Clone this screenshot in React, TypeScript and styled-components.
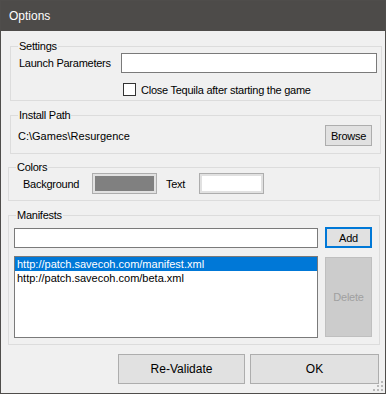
import styled, { createGlobalStyle } from "styled-components";

const GlobalStyle = createGlobalStyle`
  html, body {
    margin: 0;
    padding: 0;
    background: #f0f0f0;
  }
  body {
    font-family: "Liberation Sans", Arial, sans-serif;
    font-size: 11px;
    color: #000;
  }
`;

const Window = styled.div`
  position: relative;
  box-sizing: border-box;
  width: 386px;
  height: 394px;
  border: 1px solid #4f4d4b;
  background: #f0f0f0;
  display: flex;
  flex-direction: column;
`;

const TitleBar = styled.div`
  height: 30px;
  flex-shrink: 0;
  display: flex;
  align-items: center;
  padding-left: 8px;
  background: #4d4b49;
  color: #ffffff;
  font-size: 12px;
`;

const Group = styled.fieldset<{ $left: number; $width: number; $height: number; $top: number }>`
  box-sizing: border-box;
  margin: ${(p) => p.$top}px 0 0 ${(p) => p.$left}px;
  width: ${(p) => p.$width}px;
  height: ${(p) => p.$height}px;
  padding: 0;
  min-width: 0;
  border: 1px solid #dcdcdc;
  flex-shrink: 0;
`;

const Legend = styled.legend`
  margin-left: 7px;
  padding: 0 1px;
  font-size: 11px;
  line-height: 13px;
  letter-spacing: -0.25px;
`;

const Row = styled.div<{ $top?: number; $left?: number; $right?: number }>`
  display: flex;
  align-items: center;
  margin-top: ${(p) => p.$top ?? 0}px;
  padding-left: ${(p) => p.$left ?? 0}px;
  padding-right: ${(p) => p.$right ?? 0}px;
  letter-spacing: -0.25px;
`;

const Label = styled.span<{ $width?: number; $plain?: boolean }>`
  width: ${(p) => (p.$width ? `${p.$width}px` : "auto")};
  flex-shrink: 0;
  white-space: nowrap;
  letter-spacing: ${(p) => (p.$plain ? "0" : "inherit")};
`;

const TextBox = styled.div<{ $width: number }>`
  box-sizing: border-box;
  width: ${(p) => p.$width}px;
  height: 20px;
  background: #ffffff;
  border: 1px solid #7a7a7a;
  flex-shrink: 0;
`;

const CheckBox = styled.span`
  box-sizing: border-box;
  width: 13px;
  height: 13px;
  border: 1px solid #333333;
  background: #ffffff;
  margin-right: 5px;
  flex-shrink: 0;
`;

const Button = styled.div<{
  $width: number;
  $height: number;
  $variant?: "default" | "focused" | "disabled";
  $size?: number;
}>`
  box-sizing: border-box;
  width: ${(p) => p.$width}px;
  height: ${(p) => p.$height}px;
  display: flex;
  align-items: center;
  justify-content: center;
  flex-shrink: 0;
  font-size: ${(p) => p.$size ?? 11}px;
  letter-spacing: ${(p) => (p.$size ? "0" : "-0.25px")};
  background: ${(p) => (p.$variant === "disabled" ? "#cccccc" : "#e1e1e1")};
  color: ${(p) => (p.$variant === "disabled" ? "#a0a0a0" : "#000000")};
  border: ${(p) =>
    p.$variant === "focused"
      ? "2px solid #0078d7"
      : p.$variant === "disabled"
      ? "1px solid #bfbfbf"
      : "1px solid #adadad"};
`;

const Spacer = styled.div<{ $fixed?: number }>`
  flex: ${(p) => (p.$fixed ? `0 0 ${p.$fixed}px` : "1")};
`;

const Swatch = styled.div<{ $color: string }>`
  box-sizing: border-box;
  width: 65px;
  height: 21px;
  border: 1px solid #adadad;
  padding: 2px;
  background: #e1e1e1;
  flex-shrink: 0;

  &::after {
    content: "";
    display: block;
    width: 100%;
    height: 100%;
    background: ${(p) => p.$color};
  }
`;

const ListBox = styled.div`
  box-sizing: border-box;
  width: 304px;
  height: 82px;
  border: 1px solid #7a7a7a;
  background: #ffffff;
  flex-shrink: 0;
`;

const ListItem = styled.div<{ $selected?: boolean }>`
  height: 14px;
  line-height: 14px;
  padding-left: 2px;
  white-space: nowrap;
  letter-spacing: 0;
  background: ${(p) => (p.$selected ? "#0078d7" : "transparent")};
  color: ${(p) => (p.$selected ? "#ffffff" : "#000000")};
`;

const ListRow = styled.div`
  display: flex;
  align-items: flex-start;
  gap: 7px;
  margin-top: 8px;
  padding-left: 5px;
  letter-spacing: -0.25px;
`;

const Footer = styled.div`
  display: flex;
  justify-content: flex-end;
  gap: 5px;
  margin-top: 9px;
  padding-right: 6px;
`;

const Grip = styled.svg`
  position: absolute;
  right: 1px;
  bottom: 1px;
`;

export default function App() {
  const manifests = [
    "http://patch.savecoh.com/manifest.xml",
    "http://patch.savecoh.com/beta.xml",
  ];

  return (
    <>
      <GlobalStyle />
      <Window>
        <TitleBar>Options</TitleBar>

        <Group $top={9} $left={9} $width={372} $height={61}>
          <Legend>Settings</Legend>
          <Row $left={8}>
            <Label $width={102}>Launch Parameters</Label>
            <TextBox $width={256} />
          </Row>
          <Row $top={10} $left={112}>
            <CheckBox />
            <Label>Close Tequila after starting the game</Label>
          </Row>
        </Group>

        <Group $top={8} $left={9} $width={371} $height={45}>
          <Legend>Install Path</Legend>
          <Row $top={3} $left={7} $right={8}>
            <Label $plain>C:\Games\Resurgence</Label>
            <Spacer />
            <Button $width={47} $height={21}>
              Browse
            </Button>
          </Row>
        </Group>

        <Group $top={7} $left={7} $width={372} $height={40}>
          <Legend>Colors</Legend>
          <Row $top={-1} $left={14}>
            <Label $width={69}>Background</Label>
            <Swatch $color="#808080" />
            <Spacer $fixed={9} />
            <Label $width={33}>Text</Label>
            <Swatch $color="#ffffff" />
          </Row>
        </Group>

        <Group $top={8} $left={7} $width={372} $height={136}>
          <Legend>Manifests</Legend>
          <Row $top={5} $left={5}>
            <TextBox $width={304} />
            <Spacer $fixed={7} />
            <Button $width={47} $height={21} $variant="focused">
              Add
            </Button>
          </Row>
          <ListRow>
            <ListBox>
              {manifests.map((m, i) => (
                <ListItem key={m} $selected={i === 0}>
                  {m}
                </ListItem>
              ))}
            </ListBox>
            <Button
              $width={47}
              $height={80}
              $variant="disabled"
              style={{ marginTop: 1 }}
            >
              Delete
            </Button>
          </ListRow>
        </Group>

        <Footer>
          <Button $width={127} $height={30} $size={12}>
            Re-Validate
          </Button>
          <Button $width={129} $height={30} $size={12}>
            OK
          </Button>
        </Footer>

        <Grip width="12" height="12" viewBox="0 0 12 12">
          <g fill="#b8b8b8">
            <rect x="9" y="1" width="2" height="2" />
            <rect x="5" y="5" width="2" height="2" />
            <rect x="9" y="5" width="2" height="2" />
            <rect x="1" y="9" width="2" height="2" />
            <rect x="5" y="9" width="2" height="2" />
            <rect x="9" y="9" width="2" height="2" />
          </g>
        </Grip>
      </Window>
    </>
  );
}
